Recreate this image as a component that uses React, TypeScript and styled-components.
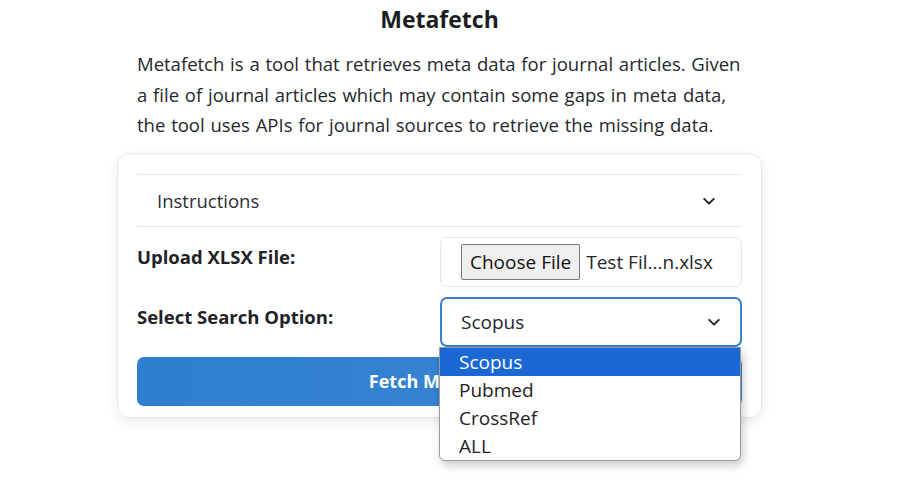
import React from 'react';
import styled, { createGlobalStyle } from 'styled-components';

const GlobalStyle = createGlobalStyle`
  html, body, #root { margin: 0; padding: 0; background: #ffffff; min-height: 100%; }
  body {
    font-family: "Open Sans", "Liberation Sans", sans-serif;
    color: #1f2329;
  }
`;

const Page = styled.div`
  box-sizing: border-box;
  width: 645px;
  min-height: 483px;
  margin: 0 144px 0 117px;
  padding-top: 4px;
`;

const Title = styled.h1`
  margin: 0;
  text-align: center;
  font-size: 23px;
  font-weight: 700;
  line-height: 30px;
  color: #1a1d21;
`;

const Intro = styled.p`
  margin: 15px 16px 0 20px;
  font-size: 18.5px;
  line-height: 30.5px;
  word-spacing: 1px;
  color: #25282c;
`;

const Card = styled.div`
  margin-top: 12px;
  border: 1px solid #e3e7ee;
  border-radius: 12px;
  padding: 20px 19px 11px 19px;
  box-shadow: 0 4px 12px rgba(0, 0, 0, 0.08);
  display: flex;
  flex-direction: column;
  gap: 10px;
`;

const Accordion = styled.div`
  border-top: 1px solid #e3e8ef;
  border-bottom: 1px solid #e3e8ef;
  height: 50px;
  padding: 1px 26px 0 20px;
  display: flex;
  align-items: center;
  justify-content: space-between;
  font-size: 18.5px;
  color: #2b2f33;
`;

const FormRow = styled.div`
  display: flex;
  align-items: center;
  justify-content: space-between;
  position: relative;
`;

const Label = styled.label`
  font-weight: 700;
  font-size: 18.5px;
  padding-bottom: 10px;
  color: #1f2226;
`;

const Field = styled.div<{ $focused?: boolean }>`
  box-sizing: border-box;
  width: 302px;
  height: 50px;
  border-radius: 7px;
  border: ${(p) => (p.$focused ? '2px solid #3583d0' : '1px solid #e1e6ee')};
  padding: ${(p) => (p.$focused ? '0 19px 0 19px' : '0 20px')};
  display: flex;
  align-items: center;
  justify-content: space-between;
  font-size: 19px;
  color: #24272b;
`;

const FileButton = styled.span`
  box-sizing: border-box;
  height: 36px;
  padding: 0 8px;
  display: inline-flex;
  align-items: center;
  background: #efefef;
  border: 1px solid #767676;
  border-radius: 2px;
  margin-right: 6px;
  color: #111;
`;

const FileLeft = styled.div`
  display: flex;
  align-items: center;
  white-space: nowrap;
`;

const FetchButton = styled.button`
  height: 49px;
  border: none;
  border-radius: 7px;
  background: linear-gradient(90deg, #2f7fcf, #3a86d3);
  color: #ffffff;
  font-family: inherit;
  font-weight: 700;
  font-size: 18px;
`;

const Options = styled.ul`
  position: absolute;
  top: 50px;
  right: 1px;
  width: 300px;
  margin: 0;
  padding: 0;
  list-style: none;
  background: #ffffff;
  border: 1px solid #9a9a9a;
  border-radius: 0 0 6px 6px;
  box-shadow: 2px 4px 10px rgba(0, 0, 0, 0.22);
  overflow: hidden;
  z-index: 5;
`;

const Option = styled.li<{ $active?: boolean }>`
  height: 28px;
  line-height: 28px;
  padding-left: 19px;
  font-size: 19px;
  background: ${(p) => (p.$active ? '#1b67d4' : 'transparent')};
  color: ${(p) => (p.$active ? '#ffffff' : '#1f2226')};
`;

const Chevron = () => (
  <svg width="14" height="14" viewBox="0 0 16 16" fill="none">
    <path d="M2.5 5.5 8 11l5.5-5.5" stroke="#212529" strokeWidth="2.2" strokeLinecap="round" strokeLinejoin="round" />
  </svg>
);

const options = ['Scopus', 'Pubmed', 'CrossRef', 'ALL'];

export default function App() {
  return (
    <Page>
      <GlobalStyle />
      <Title>Metafetch</Title>
      <Intro>
        Metafetch is a tool that retrieves meta data for journal articles. Given a file of journal
        articles which may contain some gaps in meta data, the tool uses APIs for journal sources
        to retrieve the missing data.
      </Intro>
      <Card>
        <Accordion>
          <span>Instructions</span>
          <Chevron />
        </Accordion>
        <FormRow>
          <Label>Upload XLSX File:</Label>
          <Field>
            <FileLeft>
              <FileButton>Choose File</FileButton>
              <span>Test Fil...n.xlsx</span>
            </FileLeft>
          </Field>
        </FormRow>
        <FormRow>
          <Label>Select Search Option:</Label>
          <Field $focused>
            <span>Scopus</span>
            <Chevron />
          </Field>
          <Options>
            {options.map((o, i) => (
              <Option key={o} $active={i === 0}>{o}</Option>
            ))}
          </Options>
        </FormRow>
        <FetchButton>Fetch Metadata</FetchButton>
      </Card>
    </Page>
  );
}
